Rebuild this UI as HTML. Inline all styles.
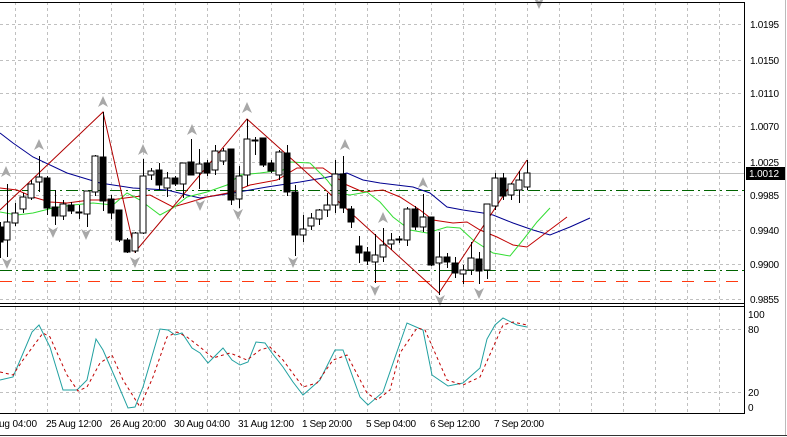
<!DOCTYPE html>
<html><head><meta charset="utf-8"><style>
html,body{margin:0;padding:0;background:#fff;width:787px;height:437px;overflow:hidden}
svg{display:block}
text{font-family:"Liberation Sans",sans-serif;font-size:10px;fill:#000}
.w{fill:#fff}.b{fill:#000}
</style></head><body>
<svg width="787" height="437" viewBox="0 0 787 437" xmlns="http://www.w3.org/2000/svg">
<defs>
<polygon id="u" points="0,-6 5,5 0,2 -5,5" fill="#a8a8a8"/>
<polygon id="d" points="0,6 5,-5 0,-2 -5,-5" fill="#a8a8a8"/>
</defs>
<rect width="787" height="437" fill="#fff"/>
<g stroke="#c0c0c0" stroke-width="1" stroke-dasharray="3,3" fill="none" shape-rendering="crispEdges">
<path d="M15.5 2V303M47.5 2V303M79.5 2V303M111.5 2V303M143.5 2V303M175.5 2V303M207.5 2V303M239.5 2V303M271.5 2V303M303.5 2V303M335.5 2V303M367.5 2V303M399.5 2V303M431.5 2V303M463.5 2V303M495.5 2V303M527.5 2V303M559.5 2V303M591.5 2V303M623.5 2V303M655.5 2V303M687.5 2V303M719.5 2V303"/>
<path d="M15.5 307V413M47.5 307V413M79.5 307V413M111.5 307V413M143.5 307V413M175.5 307V413M207.5 307V413M239.5 307V413M271.5 307V413M303.5 307V413M335.5 307V413M367.5 307V413M399.5 307V413M431.5 307V413M463.5 307V413M495.5 307V413M527.5 307V413M559.5 307V413M591.5 307V413M623.5 307V413M655.5 307V413M687.5 307V413M719.5 307V413"/>
<path d="M0 24.5H744M0 60.5H744M0 93.5H744M0 126.5H744M0 162.5H744M0 195.5H744M0 230.5H744M0 264.5H744M0 299.5H744M0 329.5H744M0 392.5H744"/>
</g>
<path d="M0 173.5H744" stroke="#c0c0c0" shape-rendering="crispEdges"/>
<path d="M0 190.5H744" stroke="#006400" stroke-dasharray="12,4,2,4" shape-rendering="crispEdges"/>
<path d="M0 270.5H744" stroke="#006400" stroke-dasharray="12,4,2,4" shape-rendering="crispEdges"/>
<path d="M0 281.5H744" stroke="#ff3a10" stroke-dasharray="12,10" shape-rendering="crispEdges"/>
<polyline fill="none" stroke="#000090" points="0,133 13,143 33,157 67,173 100,183 133,188 167,190 187,195 200,198 233,193 267,187 280,185 300,182 323,178 347,173 363,180 380,183 413,187 430,193 447,207 463,210 483,213 493,215 513,223 533,230 550,235 570,227 590,218"/>
<polyline fill="none" stroke="#c00000" points="0,188 17,190 33,197 50,202 67,203 90,200 110,200 133,197 150,195 173,207 187,203 207,197 233,192 250,185 277,180 297,168 323,168 347,185 363,192 383,190 400,197 420,210 433,220 453,223 467,222 480,230 497,237 513,245 527,247 547,232 567,217"/>
<polyline fill="none" stroke="#33dd33" points="0,212 17,215 33,213 53,208 73,205 93,203 113,205 127,193 140,200 160,215 173,208 187,197 207,192 227,185 240,175 260,173 283,170 290,162 310,163 327,180 337,193 350,195 367,192 380,202 393,217 410,230 427,233 447,227 460,228 473,240 493,253 510,256 523,240 537,222 550,208"/>
<polyline fill="none" stroke="#b00000" points="0,210 103,112 135,252 247,119 295,162 439,293 527,160"/>
<g stroke="#000" stroke-width="1" shape-rendering="crispEdges">
<path d="M0.5 222V258M7.5 184V257M15.5 203V226M23.5 193V213M31.5 180V200M39.5 156V192M47.5 176V215M55.5 190V225M63.5 200V220M71.5 202V214M79.5 205V219M87.5 191V227M95.5 155V196M103.5 112V211M111.5 195V219M119.5 210V242M127.5 238V253M135.5 232V253M143.5 159V234M151.5 168V180M159.5 163V190M167.5 172V197M175.5 176V186M183.5 163V198M191.5 139V175M199.5 149V189M207.5 160V176M215.5 145V175M223.5 148V165M231.5 149V205M239.5 166V208M247.5 119V186M255.5 137V155M263.5 138V167M271.5 160V173M279.5 150V180M287.5 145V196M295.5 185V256M303.5 215V242M311.5 213V230M319.5 209V225M327.5 193V217M335.5 160V213M343.5 156V213M351.5 206V228M359.5 236V263M367.5 247V265M375.5 234V283M383.5 228V262M391.5 233V250M399.5 236V243M407.5 207V246M415.5 206V230M423.5 194V232M431.5 217V266M439.5 232V295M447.5 253V268M455.5 257V278M463.5 265V284M471.5 242V275M479.5 252V284M487.5 204V279M495.5 173V210M503.5 173V200M511.5 183V200M519.5 171V203M527.5 160V190"/>
<rect class="b" x="-3" y="227" width="6" height="15"/>
<rect class="w" x="4" y="222" width="6" height="18"/>
<rect class="w" x="12" y="213" width="6" height="10"/>
<rect class="w" x="20" y="197" width="6" height="12"/>
<rect class="w" x="28" y="184" width="6" height="14"/>
<rect class="w" x="36" y="177" width="6" height="5"/>
<rect class="b" x="44" y="178" width="6" height="30"/>
<rect class="b" x="52" y="207" width="6" height="9"/>
<rect class="w" x="60" y="204" width="6" height="12"/>
<rect class="b" x="68" y="205" width="6" height="6"/>
<rect class="w" x="76" y="212" width="6" height="1"/>
<rect class="w" x="84" y="191" width="6" height="23"/>
<rect class="w" x="92" y="156" width="6" height="36"/>
<rect class="b" x="100" y="157" width="6" height="44"/>
<rect class="b" x="108" y="199" width="6" height="14"/>
<rect class="b" x="116" y="210" width="6" height="30"/>
<rect class="b" x="124" y="240" width="6" height="12"/>
<rect class="w" x="132" y="233" width="6" height="18"/>
<rect class="w" x="140" y="176" width="6" height="57"/>
<rect class="w" x="148" y="171" width="6" height="4"/>
<rect class="b" x="156" y="170" width="6" height="15"/>
<rect class="w" x="164" y="178" width="6" height="10"/>
<rect class="b" x="172" y="178" width="6" height="6"/>
<rect class="w" x="180" y="163" width="6" height="21"/>
<rect class="b" x="188" y="162" width="6" height="13"/>
<rect class="w" x="196" y="164" width="6" height="9"/>
<rect class="b" x="204" y="163" width="6" height="10"/>
<rect class="w" x="212" y="151" width="6" height="19"/>
<rect class="w" x="220" y="151" width="6" height="10"/>
<rect class="b" x="228" y="149" width="6" height="51"/>
<rect class="w" x="236" y="176" width="6" height="23"/>
<rect class="w" x="244" y="139" width="6" height="36"/>
<rect class="w" x="252" y="140" width="6" height="1"/>
<rect class="b" x="260" y="138" width="6" height="27"/>
<rect class="b" x="268" y="163" width="6" height="8"/>
<rect class="w" x="276" y="152" width="6" height="23"/>
<rect class="b" x="284" y="153" width="6" height="39"/>
<rect class="b" x="292" y="192" width="6" height="43"/>
<rect class="w" x="300" y="229" width="6" height="6"/>
<rect class="w" x="308" y="218" width="6" height="8"/>
<rect class="w" x="316" y="210" width="6" height="9"/>
<rect class="w" x="324" y="205" width="6" height="5"/>
<rect class="w" x="332" y="174" width="6" height="31"/>
<rect class="b" x="340" y="174" width="6" height="34"/>
<rect class="b" x="348" y="209" width="6" height="13"/>
<rect class="b" x="356" y="246" width="6" height="7"/>
<rect class="b" x="364" y="252" width="6" height="9"/>
<rect class="w" x="372" y="255" width="6" height="7"/>
<rect class="w" x="380" y="245" width="6" height="12"/>
<rect class="w" x="388" y="240" width="6" height="4"/>
<rect class="w" x="396" y="239" width="6" height="1"/>
<rect class="w" x="404" y="209" width="6" height="31"/>
<rect class="b" x="412" y="209" width="6" height="18"/>
<rect class="w" x="420" y="217" width="6" height="10"/>
<rect class="b" x="428" y="217" width="6" height="48"/>
<rect class="w" x="436" y="257" width="6" height="6"/>
<rect class="b" x="444" y="257" width="6" height="5"/>
<rect class="b" x="452" y="263" width="6" height="10"/>
<rect class="w" x="460" y="270" width="6" height="4"/>
<rect class="w" x="468" y="258" width="6" height="12"/>
<rect class="b" x="476" y="259" width="6" height="12"/>
<rect class="w" x="484" y="204" width="6" height="66"/>
<rect class="w" x="492" y="178" width="6" height="28"/>
<rect class="b" x="500" y="178" width="6" height="18"/>
<rect class="w" x="508" y="184" width="6" height="11"/>
<rect class="w" x="516" y="180" width="6" height="10"/>
<rect class="w" x="524" y="173" width="6" height="14"/>
</g>
<use href="#u" x="103" y="102"/><use href="#u" x="247" y="108"/><use href="#u" x="192" y="130"/><use href="#u" x="143" y="150"/><use href="#u" x="39" y="145"/><use href="#u" x="6" y="172"/><use href="#u" x="345" y="145"/><use href="#u" x="423" y="183"/><use href="#u" x="383" y="218"/>
<use href="#d" x="53" y="232"/><use href="#d" x="86" y="234"/><use href="#d" x="7" y="263"/><use href="#d" x="135" y="262"/><use href="#d" x="200" y="205"/><use href="#d" x="238" y="214"/><use href="#d" x="293" y="262"/><use href="#d" x="375" y="290"/><use href="#d" x="440" y="300"/><use href="#d" x="479" y="293"/><use href="#d" x="539" y="3"/>
<g stroke="#000" shape-rendering="crispEdges" fill="none">
<path d="M0 2.5H744.5V413.5H0"/>
<path d="M0 303.5H744M0 306.5H744"/>
</g>
<path d="M0 435.5H787" stroke="#333" shape-rendering="crispEdges"/>
<path d="M785.5 0V435" stroke="#bbb" shape-rendering="crispEdges"/>
<polyline fill="none" stroke="#20a0a0" points="0,380 13,377 32,332 39,325 50,347 63,390 77,390 87,380 96,339 103,350 117,382 128,408 135,407 143,387 160,329 168,330 175,335 182,333 192,348 200,353 208,363 223,348 232,360 240,365 248,362 256,342 265,343 272,353 283,367 293,382 303,395 320,380 335,350 343,350 360,397 368,405 383,392 400,343 407,323 423,330 432,375 448,386 463,383 480,368 487,339 495,325 503,318 517,325 527,327"/>
<polyline fill="none" stroke="#c00000" stroke-dasharray="3,3" points="0,372 13,375 23,360 43,333 50,337 67,375 78,391 87,387 100,363 112,355 123,380 140,407 153,377 167,337 177,332 187,337 200,347 213,358 230,353 247,360 260,350 270,347 283,360 303,387 317,383 333,360 347,355 367,393 377,400 390,390 400,353 417,328 425,330 447,380 463,385 480,377 495,343 503,325 513,322 527,325"/>
<g>
<text x="750" y="28" textLength="29">1.0195</text>
<text x="750" y="64" textLength="29">1.0150</text>
<text x="750" y="97" textLength="29">1.0110</text>
<text x="750" y="130" textLength="29">1.0070</text>
<text x="750" y="166" textLength="29">1.0025</text>
<rect x="746" y="167" width="39" height="13" fill="#000"/>
<text x="749" y="177" textLength="30" style="fill:#fff">1.0012</text>
<text x="750" y="199" textLength="29">0.9985</text>
<text x="750" y="234" textLength="29">0.9940</text>
<text x="750" y="268" textLength="29">0.9900</text>
<text x="750" y="303" textLength="29">0.9855</text>
<text x="748" y="318">100</text>
<text x="748" y="333">80</text>
<text x="748" y="396">20</text>
<text x="748" y="411">0</text>
<text x="-1" y="427" textLength="38">ug 04:00</text>
<text x="46" y="427" textLength="56">25 Aug 12:00</text>
<text x="110" y="427" textLength="56">26 Aug 20:00</text>
<text x="174" y="427" textLength="56">30 Aug 04:00</text>
<text x="238" y="427" textLength="56">31 Aug 12:00</text>
<text x="302" y="427" textLength="50">1 Sep 20:00</text>
<text x="366" y="427" textLength="50">5 Sep 04:00</text>
<text x="430" y="427" textLength="50">6 Sep 12:00</text>
<text x="494" y="427" textLength="50">7 Sep 20:00</text>
</g>
</svg>
</body></html>
